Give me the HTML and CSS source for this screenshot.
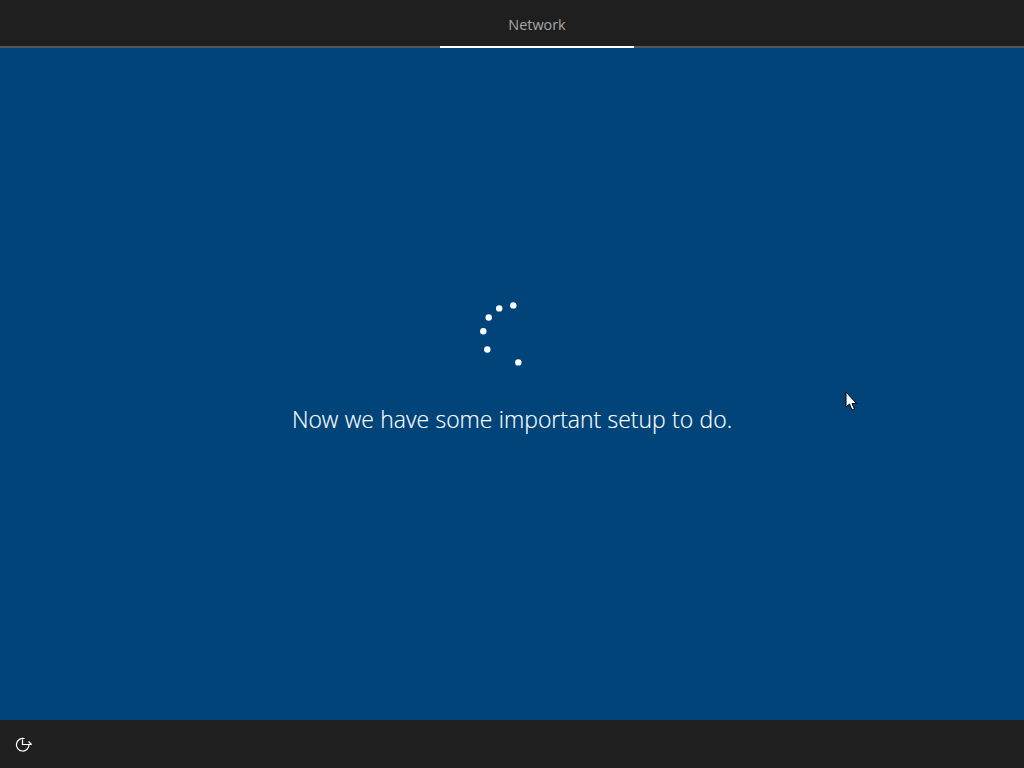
FILE: index.html
```html
<!DOCTYPE html>
<html lang="en">
<head>
<meta charset="utf-8">
<title>Network</title>
<link rel="stylesheet" href="styles.css">
</head>
<body>
<header class="topbar">
  <div class="tab">Network</div>
</header>
<main class="stage">
  <svg class="spinner" width="64" height="64" viewBox="0 0 64 64" aria-hidden="true">
    <circle cx="33.300" cy="3.400" r="3.200"/>
    <circle cx="19.200" cy="6.400" r="3.200"/>
    <circle cx="8.700" cy="15.500" r="3.200"/>
    <circle cx="3.300" cy="29.300" r="3.200"/>
    <circle cx="7.300" cy="47.500" r="3.200"/>
    <circle cx="38.300" cy="60.400" r="3.200"/>
  </svg>
  <p class="message">Now we have some important setup to do.</p>
</main>
<footer class="bottombar">
  <svg class="access" width="18" height="16" viewBox="0 0 18 16" aria-hidden="true">
    <path d="M9.500 1.700A6.300 6.300 0 1 0 14 7.500"/>
    <path d="M7.500 2.500V7.500H16.500"/>
    <path d="M13.500 4.500L16.500 7.500"/>
  </svg>
</footer>
<svg class="cursor" width="14" height="22" viewBox="0 0 14 22" aria-hidden="true">
  <path d="M1 1V16L4.500 13L7 19L9.500 18L7 12.500H11.500Z"/>
</svg>
</body>
</html>
```
FILE: styles.css
```css
html, body {
  margin: 0;
  height: 100%;
}
body {
  display: flex;
  flex-direction: column;
  height: 768px;
  overflow: hidden;
  background: #00447a;
  font-family: "Open Sans", "Noto Sans", "Liberation Sans", sans-serif;
}
.topbar {
  display: flex;
  height: 46px;
  padding-left: 440px;
  background: #1f1f1f;
  border-bottom: 2px solid #555555;
}
.tab {
  width: 194px;
  height: 48px;
  box-sizing: border-box;
  padding-top: 15px;
  border-bottom: 2px solid #ffffff;
  color: #a8a8a8;
  font-size: 14.400px;
  line-height: 19px;
  text-align: center;
}
.stage {
  flex: 1;
  display: flex;
  flex-direction: column;
  align-items: center;
  padding-top: 254px;
}
.spinner {
  display: block;
  fill: #ffffff;
}
.message {
  margin: 37px 0 0;
  color: #ffffff;
  font-size: 22.900px;
  font-weight: 300;
  word-spacing: 0.500px;
  line-height: 34px;
  white-space: nowrap;
  -webkit-text-stroke: 0.150px #ffffff;
}
.bottombar {
  display: flex;
  align-items: center;
  height: 48px;
  padding-left: 15px;
  background: #1f1f1f;
}
.access {
  margin-top: 2px;
  fill: none;
  stroke: #ffffff;
  stroke-width: 1.200;
}
.cursor {
  position: absolute;
  left: 845px;
  top: 391px;
  fill: #ffffff;
  stroke: #000000;
  stroke-width: 1;
}
```
